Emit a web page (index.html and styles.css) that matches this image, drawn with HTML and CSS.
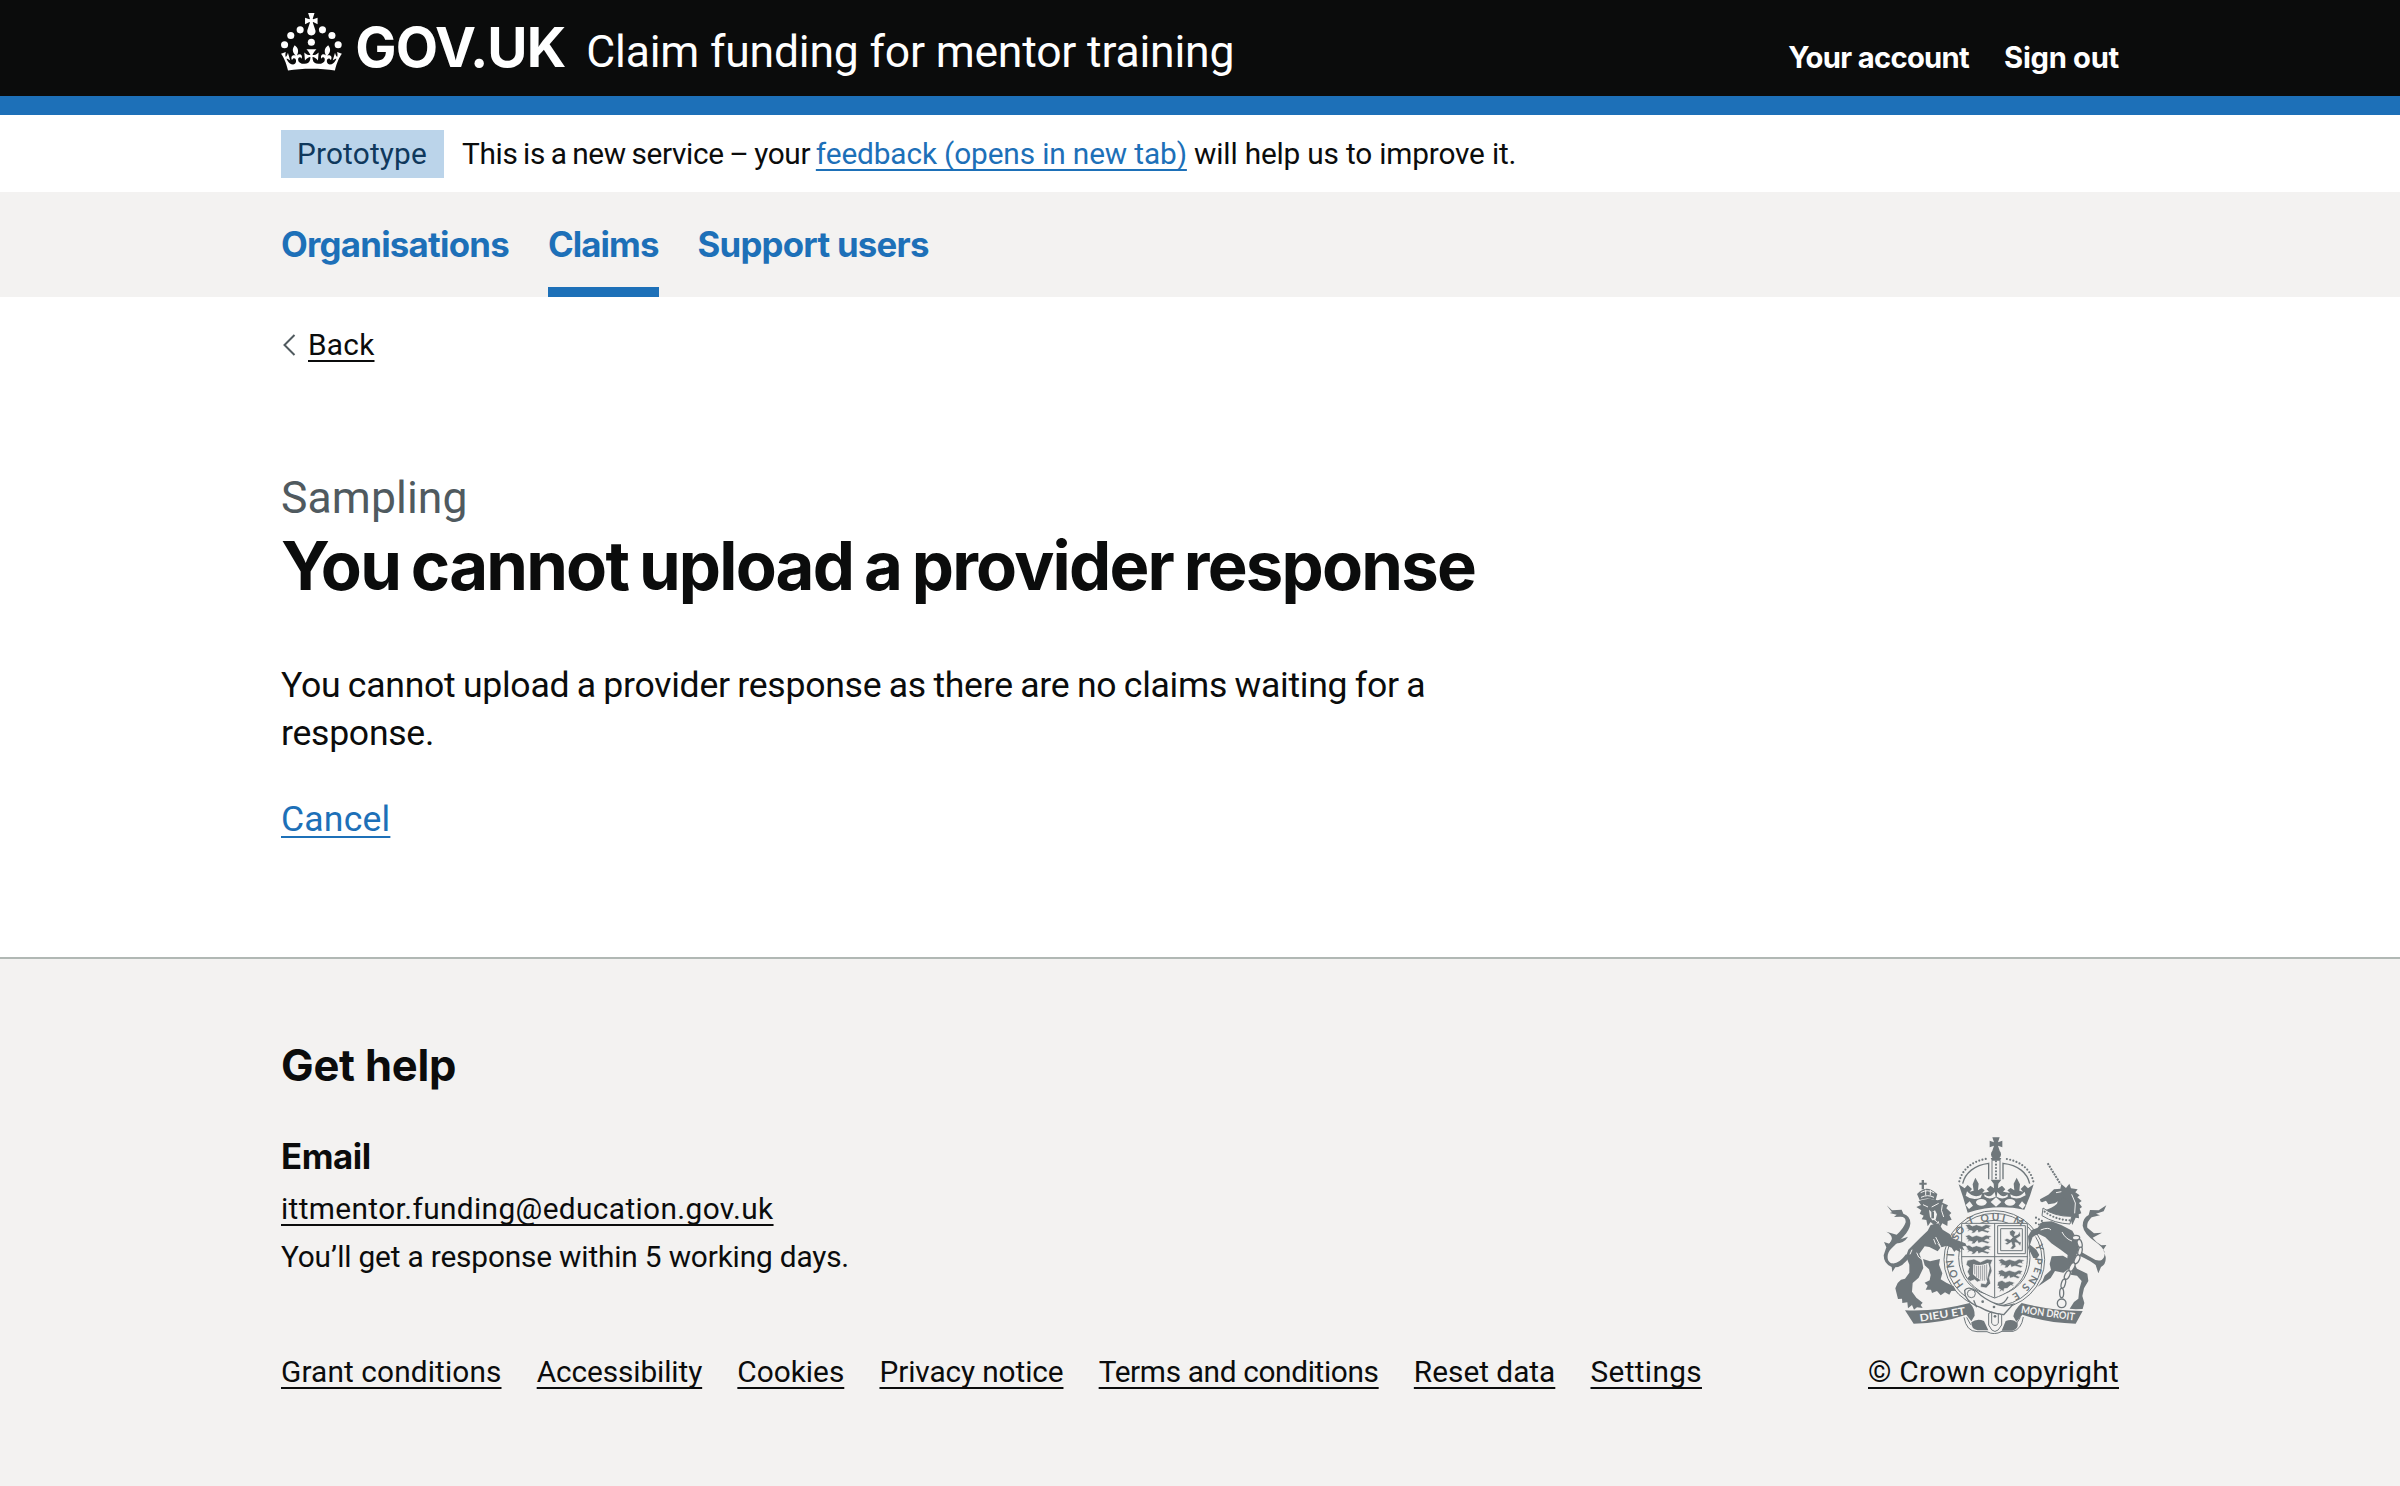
FILE: index.html
```html
<!DOCTYPE html>
<html lang="en">
<head>
<meta charset="utf-8">
<title>You cannot upload a provider response - Claim funding for mentor training</title>
<link rel="stylesheet" href="styles.css">
</head>
<body>
<header class="header">
  <div class="container header-row">
    <svg class="crown" viewBox="0 0 64 54" aria-hidden="true">
      <circle cx="20" cy="17.6" r="3.7"/><circle cx="10.2" cy="23.5" r="3.7"/><circle cx="3.7" cy="33.2" r="3.7"/><circle cx="31.7" cy="30.6" r="3.7"/><circle cx="43.3" cy="17.6" r="3.7"/><circle cx="53.2" cy="23.5" r="3.7"/><circle cx="59.7" cy="33.2" r="3.7"/>
      <path d="M33.1,9.8c.2-.1.3-.3.5-.5l4.6,2.4v-6.8l-4.6,1.5c-.1-.2-.3-.3-.5-.5l1.9-5.9h-6.7l1.9,5.9c-.2.1-.3.3-.5.5l-4.6-1.5v6.8l4.6-2.4c.1.2.3.3.5.5l-2.6,8c-.9,2.8,1.2,5.7,4.1,5.7h0c3,0,5.1-2.9,4.1-5.7l-2.6-8ZM37,37.9s-3.4,3.8-4.1,6.1c2.2,0,4.2-.5,6.4-2.8l-.7,8.5c-2-2.8-4.4-4.1-5.7-3.8.1,3.1.5,6.7,5.8,7.2,3.7.3,6.7-1.5,7-3.8.4-2.6-2-4.3-3.7-1.6-1.4-4.5,2.4-6.1,4.9-3.2-1.9-4.5-1.8-7.7,2.4-10.9,3,4,2.6,7.3-1.2,11.1,2.4-1.3,6.2,0,4,4.6-1.2-2.8-3.7-2.2-4.2.2-.3,1.7.7,3.7,3,4.2,1.9.3,4.7-.9,7-5.9-1.3,0-2.4.7-3.9,1.7l2.4-8c.6,2.3,1.4,3.7,2.2,4.5.6-1.6.5-2.8,0-5.3l5,1.8c-2.6,3.6-5.2,8.7-7.3,17.5-7.4-1.1-15.7-1.7-24.5-1.7h0c-8.8,0-17.1.6-24.5,1.7-2.1-8.9-4.7-13.9-7.3-17.5l5-1.8c-.5,2.5-.6,3.7,0,5.3.8-.8,1.6-2.3,2.2-4.5l2.4,8c-1.5-1-2.6-1.7-3.9-1.7,2.3,5,5.2,6.2,7,5.9,2.3-.4,3.3-2.4,3-4.2-.5-2.4-3-3.1-4.2-.2-2.2-4.6,1.6-6,4-4.6-3.7-3.7-4.2-7.1-1.2-11.1,4.2,3.2,4.3,6.4,2.4,10.9,2.5-2.8,6.3-1.3,4.9,3.2-1.8-2.7-4.1-1-3.7,1.6.3,2.3,3.3,4.1,7,3.8,5.4-.5,5.7-4.2,5.8-7.2-1.3-.2-3.7,1-5.7,3.8l-.7-8.5c2.2,2.3,4.2,2.7,6.4,2.8-.7-2.3-4.1-6.1-4.1-6.1h10.6Z"/>
    </svg>
    <span class="logotype">GOV.UK</span>
    <span class="service-name">Claim funding for mentor training</span>
    <nav class="account"><a class="account-link" href="#">Your account</a><a class="account-link sign-out" href="#">Sign out</a></nav>
  </div>
</header>
<div class="container phase-banner">
  <strong class="tag">Prototype</strong>
  <span class="phase-text"><span class="phase-intro">This is a new service – your </span><a class="link phase-link" href="#">feedback (opens in new tab)</a><span class="phase-end"> will help us to improve it.</span></span>
</div>
<nav class="primary-nav">
  <div class="container primary-list">
    <a class="nav-link" href="#">Organisations</a>
    <a class="nav-link current" href="#">Claims</a>
    <a class="nav-link" href="#">Support users</a>
  </div>
</nav>
<main class="container main">
  <div class="back"><svg class="chevron" viewBox="0 0 13 22" aria-hidden="true"><path d="M11.5 1 1.5 11 11.5 21"/></svg><a class="back-link" href="#">Back</a></div>
  <span class="caption">Sampling</span>
  <h1 class="heading">You cannot upload a provider response</h1>
  <p class="body">You cannot upload a provider response as there are no claims waiting for a<br>response.</p>
  <p class="cancel"><a class="link" href="#">Cancel</a></p>
</main>
<footer class="footer">
  <div class="container footer-row">
    <div class="footer-main">
      <h2 class="help">Get help</h2>
      <h3 class="email-title">Email</h3>
      <p class="contact"><a class="email" href="#">ittmentor.funding@education.gov.uk</a></p>
      <p class="contact response">You’ll get a response within 5 working days.</p>
      <div class="footer-links">
        <a class="l1" href="#">Grant conditions</a><a class="l2" href="#">Accessibility</a><a class="l3" href="#">Cookies</a><a class="l4" href="#">Privacy notice</a><a class="l5" href="#">Terms and conditions</a><a class="l6" href="#">Reset data</a><a class="l7" href="#">Settings</a>
      </div>
    </div>
    <div class="copyright">
      <svg class="arms" viewBox="68 50 672 590" aria-hidden="true">
        <!-- crown -->
        <g class="fill">
          <path d="M396 51h22l-5 15 13-5v20l-13-5 5 15h-22l5-15-13 5V61l13 5z"/>
          <circle cx="407" cy="102" r="15"/>
          <path d="M391 113h32l-4 8h-24z"/>
          <path d="M295 192 313 204 322 194 335 206 328 214 340 211 337 192 345 172 355 190 353 210 364 203 373 210 366 218 386 214 379 207 390 196 401 204 400 190 391 178H423L414 190 413 204 425 196 435 207 428 214 449 218 441 210 451 203 462 210 460 190 469 172 479 192 477 211 488 214 481 206 493 194 503 204 520 192 509 226 492 268Q407 250 322 277L308 230z"/>
        </g>
        <g class="line">
          <path class="beads" d="M297 183C306 145 339 121 381 115"/>
          <path class="beads" d="M519 183C510 145 477 121 433 115"/>
          <path class="w4" d="M307 190C314 158 343 134 385 129V177"/>
          <path class="w4" d="M508 190C501 158 474 134 428 129V177"/>
          <path class="beads" d="M407 123V176"/>
          <path d="M395 120V178M419 120V178"/>
        </g>
        <g class="paper">
          <ellipse cx="363" cy="246" rx="16" ry="10"/><ellipse cx="449" cy="246" rx="16" ry="10"/>
          <path d="M407 231 423 245 407 259 391 245zM328 243 338 256 326 266 316 254zM485 243 496 254 487 265 475 256z"/>
          <path d="M320 213Q342 237 365 222L361 232Q336 242 316 226zM372 222Q389 236 403 215L406 229Q386 240 372 228zM411 215Q427 236 442 222V229Q426 240 409 229zM450 222Q473 237 493 214L496 225Q473 240 452 231z"/>
        </g>
        <!-- garter and shield -->
        <g class="line">
          <ellipse class="paper" cx="402" cy="418" rx="151" ry="147"/>
          <ellipse cx="402" cy="418" rx="143" ry="139"/>
          <ellipse cx="402" cy="412" rx="107" ry="112"/>
          <path class="paper" d="M304 309H501V410C502 473 467 510 403 533 336 508 304 473 304 410z"/>
          <path d="M403 309V532M304 409H502"/>
          <path d="M412 316H495V400H412zM421 325H486V391H421z"/>
        </g>
        <g class="motto">
          <text x="264" y="415" transform="rotate(-87 269 403)">I</text>
          <text x="361" y="304" transform="rotate(-8 375 295)">Q</text>
          <text x="394" y="302">U</text>
          <text x="425" y="304" transform="rotate(12 430 295)">I</text>
          <text x="322" y="311" transform="rotate(-20 330 300)">T</text>
          <text x="460" y="311" transform="rotate(28 470 302)">M</text>
          <text x="277" y="360" transform="rotate(-58 286 350)">S</text>
          <text x="287" y="342" transform="rotate(-45 298 332)">O</text>
          <text x="259" y="442" transform="rotate(-98 270 432)">N</text>
          <text x="270" y="471" transform="rotate(-112 281 461)">O</text>
          <text x="285" y="500" transform="rotate(-126 296 490)">H</text>
          <text x="529" y="388" transform="rotate(78 536 378)">Y</text>
          <text x="527" y="430" transform="rotate(97 534 420)">P</text>
          <text x="523" y="460" transform="rotate(107 531 450)">E</text>
          <text x="509" y="486" transform="rotate(120 519 476)">N</text>
          <text x="488" y="510" transform="rotate(132 496 500)">S</text>
          <text x="460" y="536" transform="rotate(148 468 526)">E</text>
        </g>
        <!-- heraldic quarters -->
        <g class="fill quarters">
          <path d="M314 315l12-4 10 6 12-4 17 5 12-6 18 4-9 5 5 6-11-3-7 4 16 5-7 5-17-5-11 4-3-8-9 9-9 1 3-7-8-2-7 4 3-8-8-2 5-3z"/>
          <path d="M314 347l12-4 10 6 12-4 17 5 12-6 18 4-9 5 5 6-11-3-7 4 16 5-7 5-17-5-11 4-3-8-9 9-9 1 3-7-8-2-7 4 3-8-8-2 5-3z"/>
          <path d="M314 378l12-4 10 6 12-4 17 5 12-6 18 4-9 5 5 6-11-3-7 4 16 5-7 5-17-5-11 4-3-8-9 9-9 1 3-7-8-2-7 4 3-8-8-2 5-3z"/>
          <path d="M413 419l12-4 10 6 12-4 17 5 12-6 18 4-9 5 5 6-11-3-7 4 16 5-7 5-17-5-11 4-3-8-9 9-9 1 3-7-8-2-7 4 3-8-8-2 5-3z"/>
          <path d="M413 452l12-4 10 6 12-4 17 5 12-6 12 4-7 5 5 6-11-3-7 4 12 5-7 5-13-5-11 4-3-8-9 9-9 1 3-7-8-2-7 4 3-8-8-2 5-3z"/>
          <path d="M413 484l12-4 10 6 12-4 17 5-7 5 5 6-11-3-10 9-9 1-2 9-6-4-8 8 4-11-9-4 5-5-6-2z"/>
          <path d="M447 334l9-6 10 7-4 11 11-4 5-10 3 15-13 8 8 9 7 1-3 13-8-10-8-1 3 11-9 9-9-2 7-9-3-10-13 8-7-5 8-3-10-7 9-5 10 4 7-7-8-8z"/>
          <path d="M321 420l20-4 19 9 20-9 17 2-6 15 4 19-8 20 4 17-13 14-18-3 2-12 14 3 4-9-12-4-17 7-8-7-13 5-12-7 9-10-6-12 6-13-10-8z"/>
        </g>
        <path class="paper" d="M339 431Q360 439 384 427L388 444 379 483Q360 485 338 462z"/>
        <path class="hair" d="M343 434V462M349 436V470M355 436V474M361 436V478M367 435V481M373 434V481M379 432V478M334 428Q355 438 386 421"/>
        <!-- supporter lion -->
        <g class="fill">
          <path d="M170 221Q185 206 198 205T231 221L226 240Q202 229 178 239z"/>
          <path d="M184 179h7v8h8v6h-8v14h-7v-14h-7v-6h7z"/>
          <path d="M174 243 187 238 207 235 232 240 250 235 246 247 263 255 258 264 273 278 267 284 274 298 262 302 261 317 246 309 240 320 234 301 224 317 211 305 202 318 198 299 184 297 190 286 178 280 183 270 168 260 182 254z"/>
          <path d="M235 309 247 328 268 341 276 354 297 362 315 369 319 377 306 378 312 390 297 384 301 396 287 389 282 395 274 382 259 376 244 381 229 366 240 382 232 393 207 380 193 378 177 400 185 421 189 443 175 472 157 488 155 514 168 532 187 547 181 554 187 563 170 561 161 568 155 554 143 564 141 546 126 548 125 535 113 536 109 520 105 504 112 488 122 478 134 475 147 457 147 433 137 408 144 388 180 352 202 331 211 314z"/>
          <path d="M188 416 209 423 239 416 236 433 246 459 241 477 258 487 280 498 287 511 273 512 267 523 254 516 241 525 230 512 215 518 212 508 196 508 202 496 193 487 208 480 211 464 206 447 193 435z"/>
          <path d="M79 255 95 270 124 268 129 280Q151 287 150 310C148 337 116 360 94 384 75 402 80 427 96 429Q116 431 137 402L149 408Q127 441 105 441L96 455 94 440Q70 431 70 405L78 381 71 365 87 370Q106 350 78 334L109 343Q130 325 136 306 137 288 119 289L101 290 109 283 88 278 95 276z"/>
          <path d="M100 352 121 357 143 349Q130 371 102 369L85 388 82 376z"/>
        </g>
        <g class="hairpaper">
          <path d="M181 217Q202 205 222 218M182 231Q202 221 221 231M196 208V225M210 209V225M188 253L203 260M214 260L235 249M218 278V295L231 305M246 253Q239 269 250 290"/>
          <path d="M169 397 175 410 187 418M220 356 226 372M226 350 240 377M149 402 155 388"/>
        </g>
        <path class="paper" d="M206 268 214 276 224 270 230 282 226 298 216 300 209 290z"/>
        <path class="fill" d="M213 274h8v20h-8z"/>
        <!-- supporter unicorn -->
        <g class="fill">
          <path d="M539 237 564 223 581 207 600 205 603 191 617 203 627 190 632 204 652 207 645 216 658 225 651 231 664 242 656 248 665 260 658 265 663 279 655 282 656 294 646 292 636 314 629 292 632 268 608 260 593 243 583 249 564 252 557 241 545 246 540 243z"/>
          <path d="M593 240 612 232 634 252 634 294 570 290 553 270Q577 262 590 250z"/>
          <path d="M545 305 574 303 604 315 636 331 648 354 655 387 646 409 643 431 631 444 619 431 622 404 601 388 573 369 555 351 535 341 517 350 509 373 528 388 537 404 530 414 519 413 507 390 503 348 514 329 532 322z"/>
          <path d="M574 408 608 406 625 416 630 442 609 457 584 452 571 473 553 485 531 500 547 481 553 466 572 449 568 431z"/>
          <path d="M642 430 650 445 681 460 684 482 671 504 666 527 672 548 667 566 646 567 628 565 641 545 654 535 657 507 664 482 650 466 631 463z"/>
          <path d="M738 255 715 270 689 269 685 284Q667 293 667 316 671 341 705 364 725 378 732 393 735 411 724 419 711 424 695 413L663 395 659 407Q690 421 706 434L714 459 722 440Q738 432 736 410L729 388 738 374 723 375Q705 364 697 352L725 337 701 339 681 322Q678 306 694 291L719 285 707 280 730 273z"/>
        </g>
        <g class="hairpaper"><path d="M587 217 603 214M634 222 645 248 643 279M541 329Q565 319 572 329M605 335Q616 356 635 362M525 345 517 376"/></g>
        <g class="line">
          <path class="horn" d="M562 129 601 192"/>
          <path class="paper" d="M548 263Q582 289 634 288L629 311Q582 309 545 286z"/>
          <path class="beads" d="M553 274Q585 298 628 300"/>
          <path class="beads" d="M527 292 545 302 541 315 526 308"/>
        </g>
        <g class="chain">
          <ellipse cx="647" cy="352" rx="11" ry="7"/><ellipse cx="658" cy="370" rx="7" ry="13" transform="rotate(-15 658 370)"/><ellipse cx="659" cy="393" rx="6" ry="13" transform="rotate(14 659 393)"/><ellipse cx="650" cy="417" rx="7" ry="14" transform="rotate(25 650 417)"/><ellipse cx="635" cy="440" rx="7" ry="14" transform="rotate(27 635 440)"/><ellipse cx="621" cy="464" rx="7" ry="14" transform="rotate(26 621 464)"/><ellipse cx="609" cy="490" rx="6" ry="14" transform="rotate(15 609 490)"/><ellipse cx="604" cy="518" rx="6" ry="14"/><circle cx="604" cy="549" r="13"/>
        </g>
        <!-- buckle and ribbon -->
        <g class="line">
          <path class="paper w4" d="M313 510Q323 495 349 513 370 536 412 553 432 560 458 552L430 583Q388 578 360 561 326 550 315 526z"/>
          <circle cx="333" cy="520" r="12"/>
          <path class="w4" d="M340 540 349 561M402 548Q428 560 443 529"/>
          <path class="paper" d="M385 579V614Q403 653 424 614V583L414 580V609Q404 622 394 609V575z"/>
          <path d="M311 591Q318 633 350 634H380Q401 646 425 633H458Q483 627 489 590M319 591 331 613M480 591 467 612"/>
        </g>
        <g class="fill">
          <circle cx="367" cy="544" r="4"/><circle cx="401" cy="560" r="4"/><circle cx="404" cy="588" r="4"/>
          <path d="M333 606Q350 593 371 602L384 630H352Q332 626 333 606zM436 602Q458 593 472 609 475 626 456 631H424z"/>
          <path d="M134 570Q233 574 328 548 344 564 343 586L333 603 318 583Q242 609 160 610z"/>
          <path d="M484 548Q568 570 667 572L646 610Q564 609 486 583L468 604 459 588Q462 568 484 548z"/>
        </g>
        <text class="scroll" transform="translate(180 604) rotate(-9)" textLength="138" lengthAdjust="spacingAndGlyphs">DIEU ET</text>
        <text class="scroll" transform="translate(481 578) rotate(8)" textLength="162" lengthAdjust="spacingAndGlyphs">MON DROIT</text>
      </svg>
      <a class="crown-copyright" href="#">© Crown copyright</a>
    </div>
  </div>
</footer>
</body>
</html>
```
FILE: styles.css
```css
* { box-sizing: border-box; }
body { margin: 0; background: #fff; color: #0b0c0c; font-family: Roboto, "Liberation Sans", sans-serif; font-size: 29.8px; }
h1, h2, h3, p { margin: 0; }
a { color: inherit; text-decoration-thickness: 2px; text-underline-offset: 4.5px; text-decoration-skip-ink: none; }
.container { width: 1838px; margin: 0 auto; }
.link { color: #1d70b8; }
.logotype, .account, .primary-list, .heading, .help, .email-title { font-family: Inter, Roboto, sans-serif; font-weight: 700; }

.header { height: 115px; background: #0b0c0c; border-bottom: 19px solid #1d70b8; color: #fff; }
.header-row { display: flex; align-items: baseline; padding-top: 14px; }
.crown { align-self: flex-start; width: 61.3px; height: 51.7px; margin-top: -1px; fill: #fff; overflow: visible; }
.logotype { margin-left: 13px; font-size: 55px; letter-spacing: -.016em; width: 231px; }
.service-name { font-size: 44.5px; letter-spacing: -.0045em; }
.account { display: flex; gap: 35px; margin-left: auto; font-size: 29.2px; letter-spacing: -.0238em; transform: translateY(1px); }
.account-link { text-decoration: none; }
.sign-out { letter-spacing: -.0102em; }

.phase-banner { display: flex; align-items: center; gap: 18px; height: 77px; }
.tag { width: 163px; height: 48px; padding-left: 16px; line-height: 48px; background: #bbd4ea; color: #0f385c; font-weight: 400; letter-spacing: .0057em; }
.phase-text { line-height: 48px; white-space: pre; }
.phase-intro { letter-spacing: -.0108em; word-spacing: -.05em; }
.phase-link { letter-spacing: -.0044em; }
.phase-end { letter-spacing: -.0062em; }

.primary-nav { background: #f3f2f1; }
.primary-list { display: flex; gap: 39px; height: 105px; line-height: 105px; font-size: 34.8px; letter-spacing: -.0219em; }
.nav-link { color: #1d70b8; text-decoration: none; }
.current { letter-spacing: -.026em; box-shadow: inset 0 -10px #1d70b8; }

.back { display: flex; align-items: center; gap: 12px; margin-top: 28px; line-height: 40px; letter-spacing: .0085em; }
.chevron { width: 13px; height: 22px; margin-left: 2px; fill: none; stroke: #505a5f; stroke-width: 2; }
.caption { display: block; margin-top: 104px; color: #505a5f; font-size: 44.5px; line-height: 58px; letter-spacing: .002em; }
.heading { font-size: 67px; line-height: 77px; letter-spacing: -.0266em; word-spacing: -.05em; }
.body { margin-top: 57px; font-size: 35.6px; line-height: 48px; letter-spacing: -.0075em; word-spacing: -.03em; white-space: nowrap; }
.cancel { margin-top: 38px; font-size: 35.6px; line-height: 48px; letter-spacing: .005em; }

.footer { margin-top: 114px; min-height: 529px; border-top: 2px solid #b1b8b4; background: #f3f2f1; }
.footer-row { display: flex; align-items: flex-end; justify-content: space-between; padding-top: 77px; }
.help { font-size: 43.5px; line-height: 58px; letter-spacing: -.005em; }
.email-title { margin: 38px 0 5px; font-size: 34.8px; line-height: 48px; letter-spacing: -.013em; }
.contact { line-height: 48px; letter-spacing: .0125em; }
.response { letter-spacing: -.0055em; }
.footer-links { display: flex; gap: 35.2px; margin-top: 67px; line-height: 48px; }
.l1 { letter-spacing: .0041em; }
.l2 { letter-spacing: -.0033em; }
.l4 { letter-spacing: -.0036em; }
.l5 { letter-spacing: -.0116em; }
.l7 { letter-spacing: .0112em; }
.copyright { display: flex; flex-direction: column; align-items: center; width: 251px; line-height: 48px; white-space: nowrap; letter-spacing: .0084em; }
.arms { width: 224px; height: 196.7px; margin: 0 0 14.5px 2px; }
.fill { fill: #6f777b; }
.quarters { stroke: #f3f2f1; stroke-width: 2; }
.line { fill: none; stroke: #6f777b; stroke-width: 3; }
.w4 { stroke-width: 4; }
.paper { fill: #f3f2f1; }
.beads { stroke-width: 6.5; stroke-linecap: round; stroke-dasharray: 0 10; }
.horn { stroke-width: 6; stroke-dasharray: 6 3; }
.hair { fill: none; stroke: #6f777b; stroke-width: 2; }
.hairpaper { fill: none; stroke: #f3f2f1; stroke-width: 3; }
.chain { fill: #f3f2f1; stroke: #6f777b; stroke-width: 4; }
.motto { fill: #6f777b; font: 700 31px Lato, sans-serif; letter-spacing: 0; }
.scroll { fill: #f3f2f1; font: 700 31px Lato, sans-serif; letter-spacing: 0; }
```
